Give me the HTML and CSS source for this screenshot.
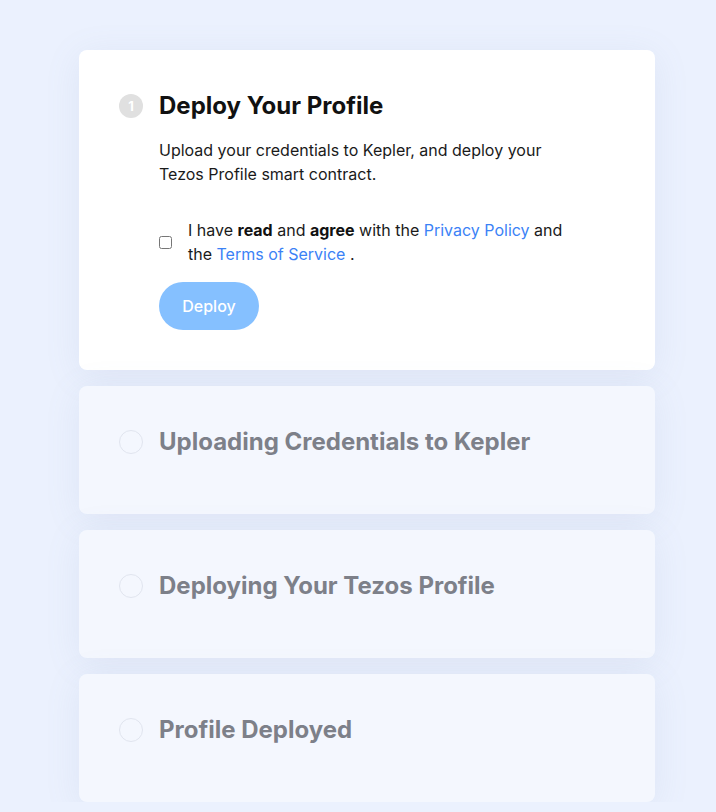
FILE: index.html
```html
<!DOCTYPE html>
<html>
<head>
<meta charset="utf-8">
<link rel="stylesheet" href="styles.css">
</head>
<body>
<div class="page">
  <div class="steps">
    <section class="card active">
      <div class="head">
        <span class="num">1</span>
        <h2>Deploy Your Profile</h2>
      </div>
      <div class="body">
        <p class="desc">Upload your credentials to Kepler, and deploy your<br>Tezos Profile smart contract.</p>
        <label class="agree">
          <input type="checkbox" class="check">
          <span class="agree-text">I have <b>read</b> and <b>agree</b> with the <a href="#">Privacy Policy</a> and the <a href="#">Terms of Service</a> .</span>
        </label>
        <button class="deploy">Deploy</button>
      </div>
    </section>
    <section class="card">
      <div class="head">
        <span class="num empty"></span>
        <h2>Uploading Credentials to Kepler</h2>
      </div>
    </section>
    <section class="card">
      <div class="head">
        <span class="num empty"></span>
        <h2>Deploying Your Tezos Profile</h2>
      </div>
    </section>
    <section class="card">
      <div class="head">
        <span class="num empty"></span>
        <h2>Profile Deployed</h2>
      </div>
    </section>
  </div>
</div>
</body>
</html>
```

FILE: styles.css
```css
html, body {
  margin: 0;
  padding: 0;
  background: #ebf1fe;
  font-family: Inter, "Noto Sans", sans-serif;
  color: #111;
}
.page {
  padding: 50px 0 0 79px;
}
.steps {
  width: 576px;
  display: flex;
  flex-direction: column;
  gap: 16px;
}
.card {
  background: #f4f7fe;
  border-radius: 8px;
  padding: 41px 40px 57px;
  box-shadow: 0 6px 36px rgba(120, 135, 175, 0.11);
}
.card.active {
  background: #fff;
  padding-bottom: 40px;
}
.head {
  display: flex;
  align-items: center;
  gap: 16px;
}
.num {
  width: 24px;
  height: 24px;
  border-radius: 50%;
  background: #e0e0e0;
  color: #fff;
  font-size: 13px;
  font-weight: 700;
  display: flex;
  align-items: center;
  justify-content: center;
  flex: none;
}
.num.empty {
  background: transparent;
  border: 1px solid #e1e5ef;
  box-sizing: border-box;
}
h2 {
  margin: 0;
  font-size: 24px;
  line-height: 30px;
  font-weight: 700;
  color: #7d8089;
}
.active h2 {
  color: #111;
}
.body {
  padding-left: 40px;
  margin-top: 17px;
}
.desc {
  margin: 0;
  font-size: 16px;
  line-height: 24px;
  color: #1a1a1a;
}
.agree {
  display: flex;
  align-items: center;
  margin-top: 32px;
  font-size: 16px;
  line-height: 24px;
  color: #1a1a1a;
}
.agree-text {
  max-width: 400px;
}
.agree b {
  font-weight: 700;
  color: #111;
}
.agree a {
  color: #3b82f6;
  text-decoration: none;
}
.check {
  width: 13px;
  height: 13px;
  margin: 0 16px 0 0;
  flex: none;
}
.deploy {
  margin-top: 16px;
  width: 100px;
  height: 48px;
  border: none;
  border-radius: 24px;
  background: #85c0ff;
  color: #fff;
  font-family: Inter, "Noto Sans", sans-serif;
  font-size: 16px;
  font-weight: 500;
}
```
